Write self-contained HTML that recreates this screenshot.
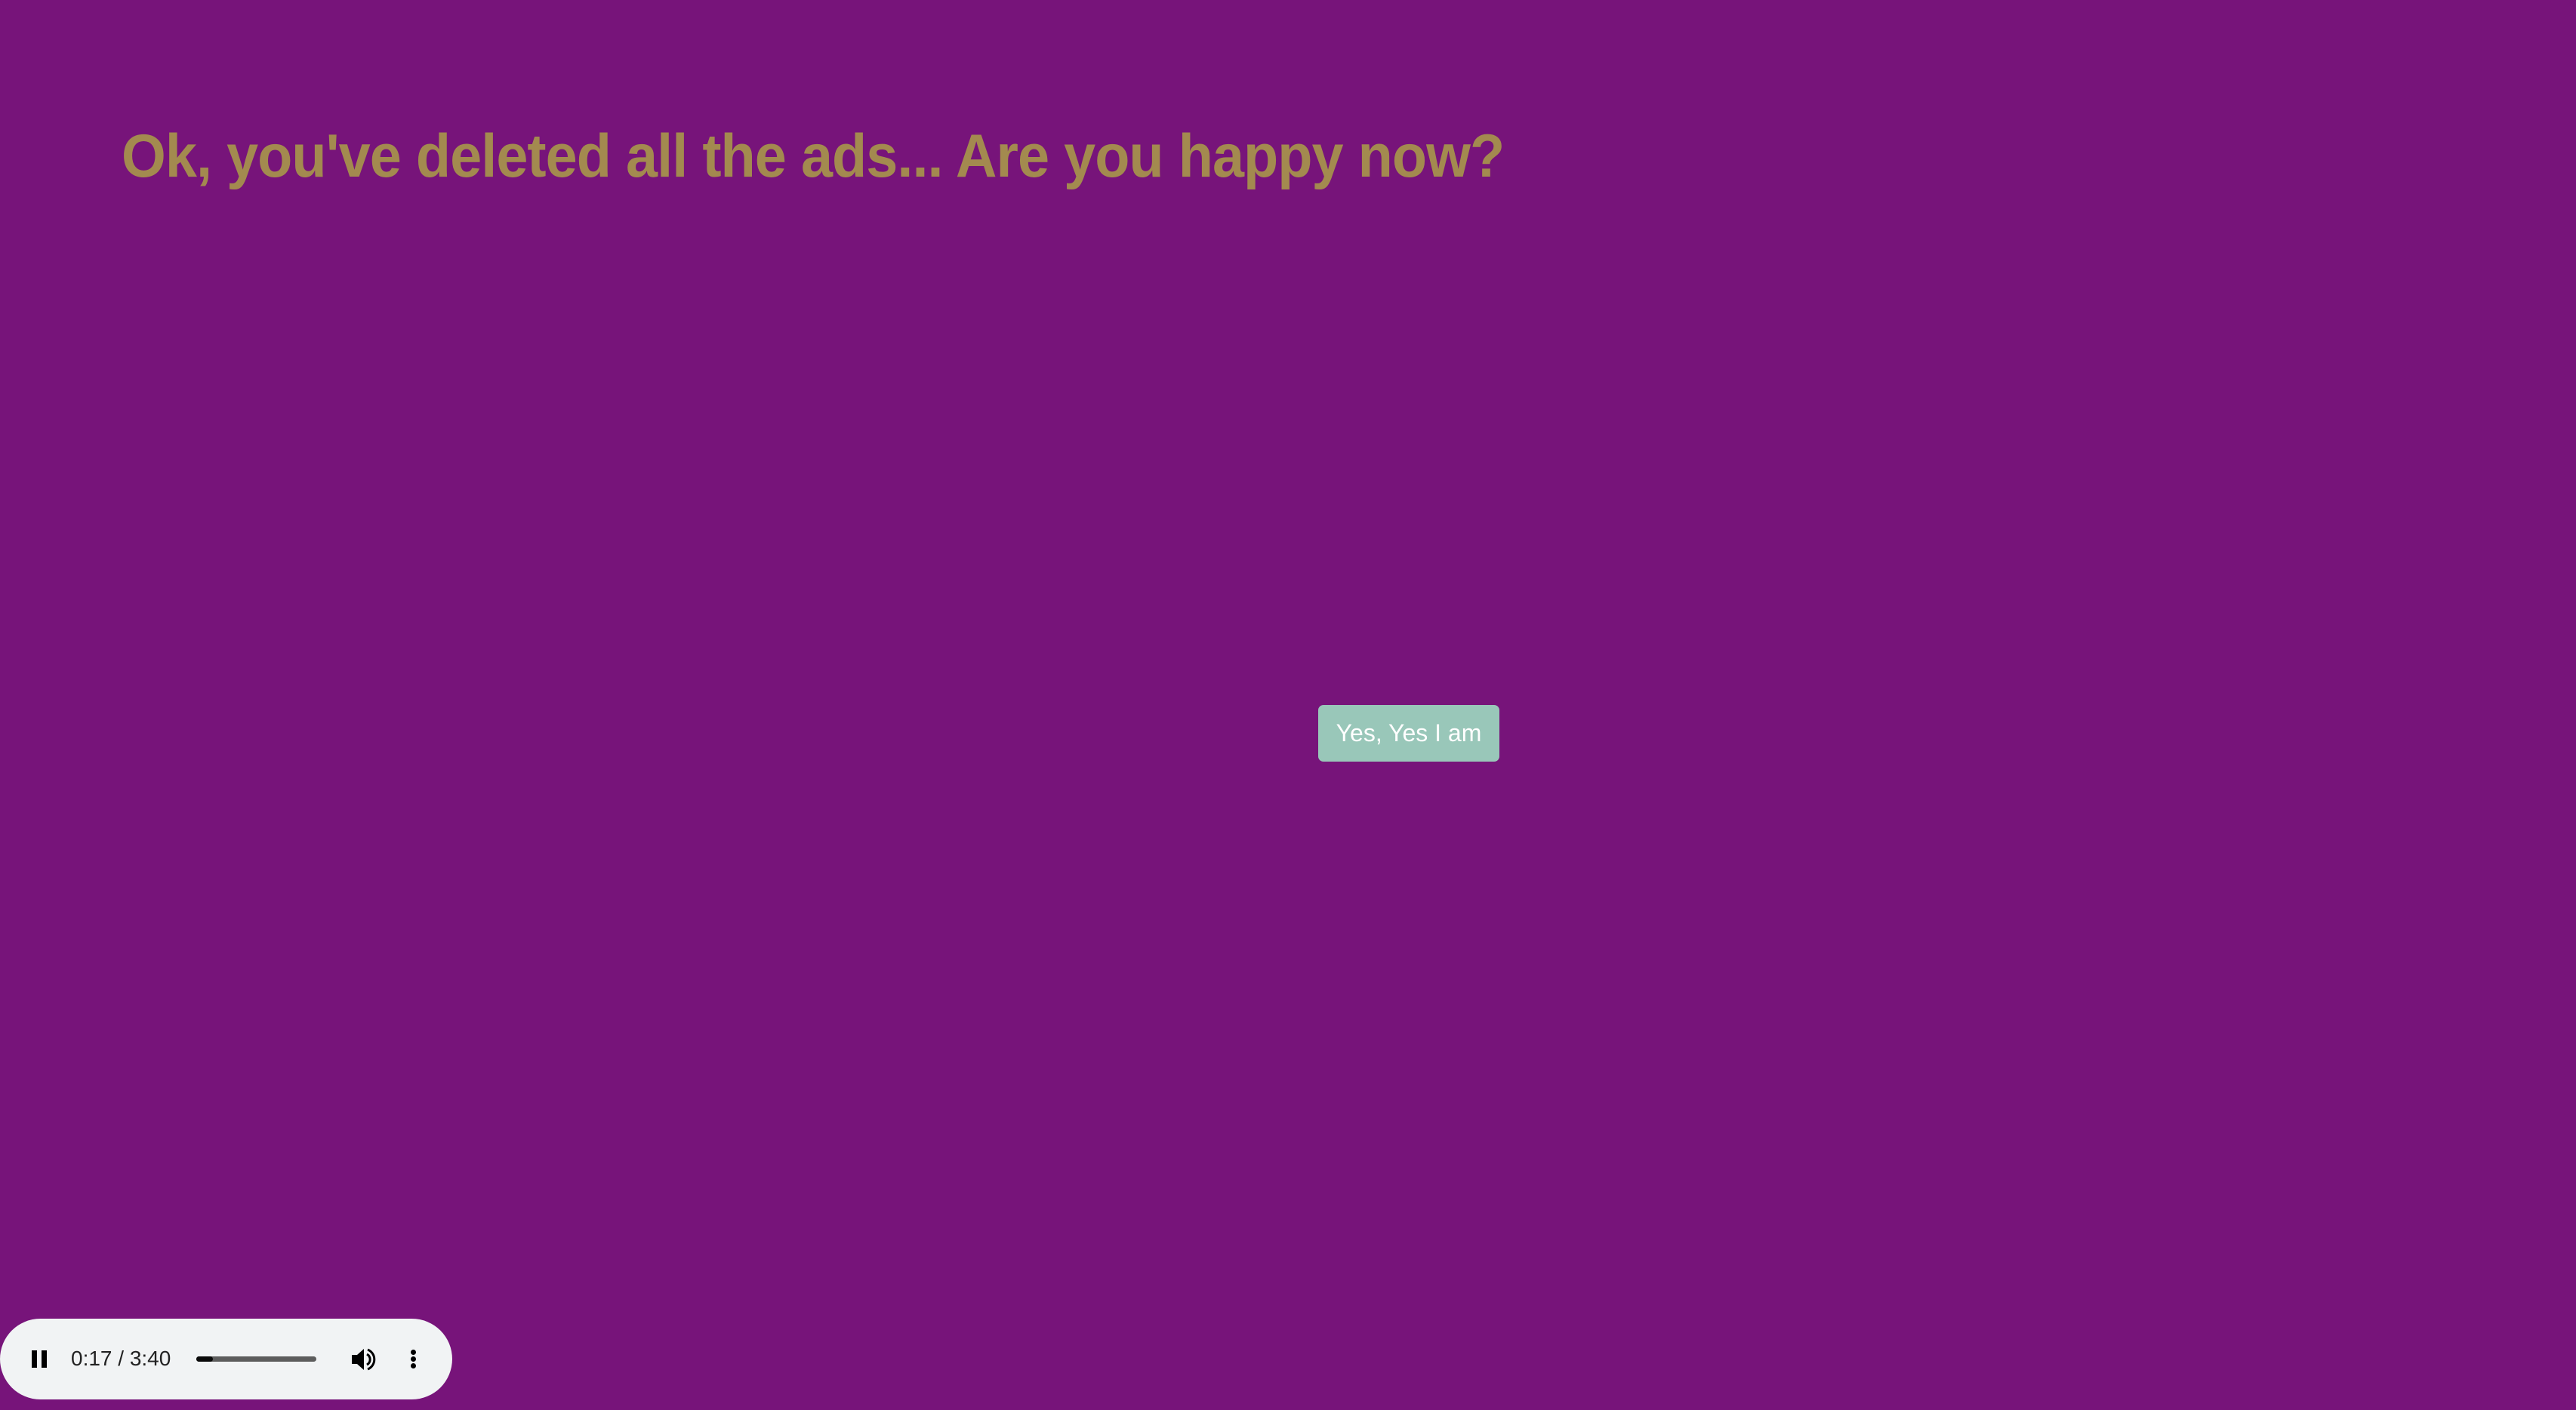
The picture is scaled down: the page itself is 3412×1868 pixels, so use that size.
<!DOCTYPE html>
<html><head><meta charset="utf-8"><style>
html,body{margin:0;padding:0;width:3412px;height:1868px;overflow:hidden;background:#77147a;font-family:"Liberation Sans",Roboto,sans-serif}
h1{position:absolute;left:161px;top:160px;margin:0;font-size:81px;font-weight:bold;color:#a38a4f;white-space:nowrap;letter-spacing:-1px;line-height:94px;transform:scaleX(0.933);transform-origin:0 0}
.btn{position:absolute;left:1746px;top:934px;width:240px;height:75px;background:#99c7b9;border-radius:7px;color:#fff;font-size:32px;line-height:75px;text-align:center}
.player{position:absolute;left:0;top:1747px;width:599px;height:107px;background:#f1f3f4;border-radius:54px}
.p{position:absolute;background:#000}
.t{position:absolute;left:94px;top:1783px;font-size:28px;color:#222;line-height:34px}
</style></head><body>
<h1>Ok, you've deleted all the ads... Are you happy now?</h1>
<div class="btn">Yes, Yes I am</div>
<div class="player"></div>
<div class="p" style="left:42px;top:1789px;width:7px;height:23px"></div>
<div class="p" style="left:55px;top:1789px;width:7px;height:23px"></div>
<div class="t">0:17 / 3:40</div>
<div style="position:absolute;left:260px;top:1797px;width:159px;height:7px;border-radius:4px;background:#5c5c5c"></div>
<div style="position:absolute;left:260px;top:1797px;width:22px;height:7px;border-radius:4px;background:#0a0a0a"></div>
<svg style="position:absolute;left:466px;top:1786px" width="34" height="30" viewBox="0 0 34 30"><path d="M0 9h7l9-8v28l-9-8H0z" fill="#000"/><path d="M20 8a8 8 0 0 1 0 14" stroke="#000" stroke-width="3" fill="none"/><path d="M21 2a14 14 0 0 1 0 26" stroke="#000" stroke-width="3" fill="none"/></svg>
<div class="p" style="left:544px;top:1788px;width:7px;height:7px;border-radius:50%"></div>
<div class="p" style="left:544px;top:1797px;width:7px;height:7px;border-radius:50%"></div>
<div class="p" style="left:544px;top:1806px;width:7px;height:7px;border-radius:50%"></div>
</body></html>
